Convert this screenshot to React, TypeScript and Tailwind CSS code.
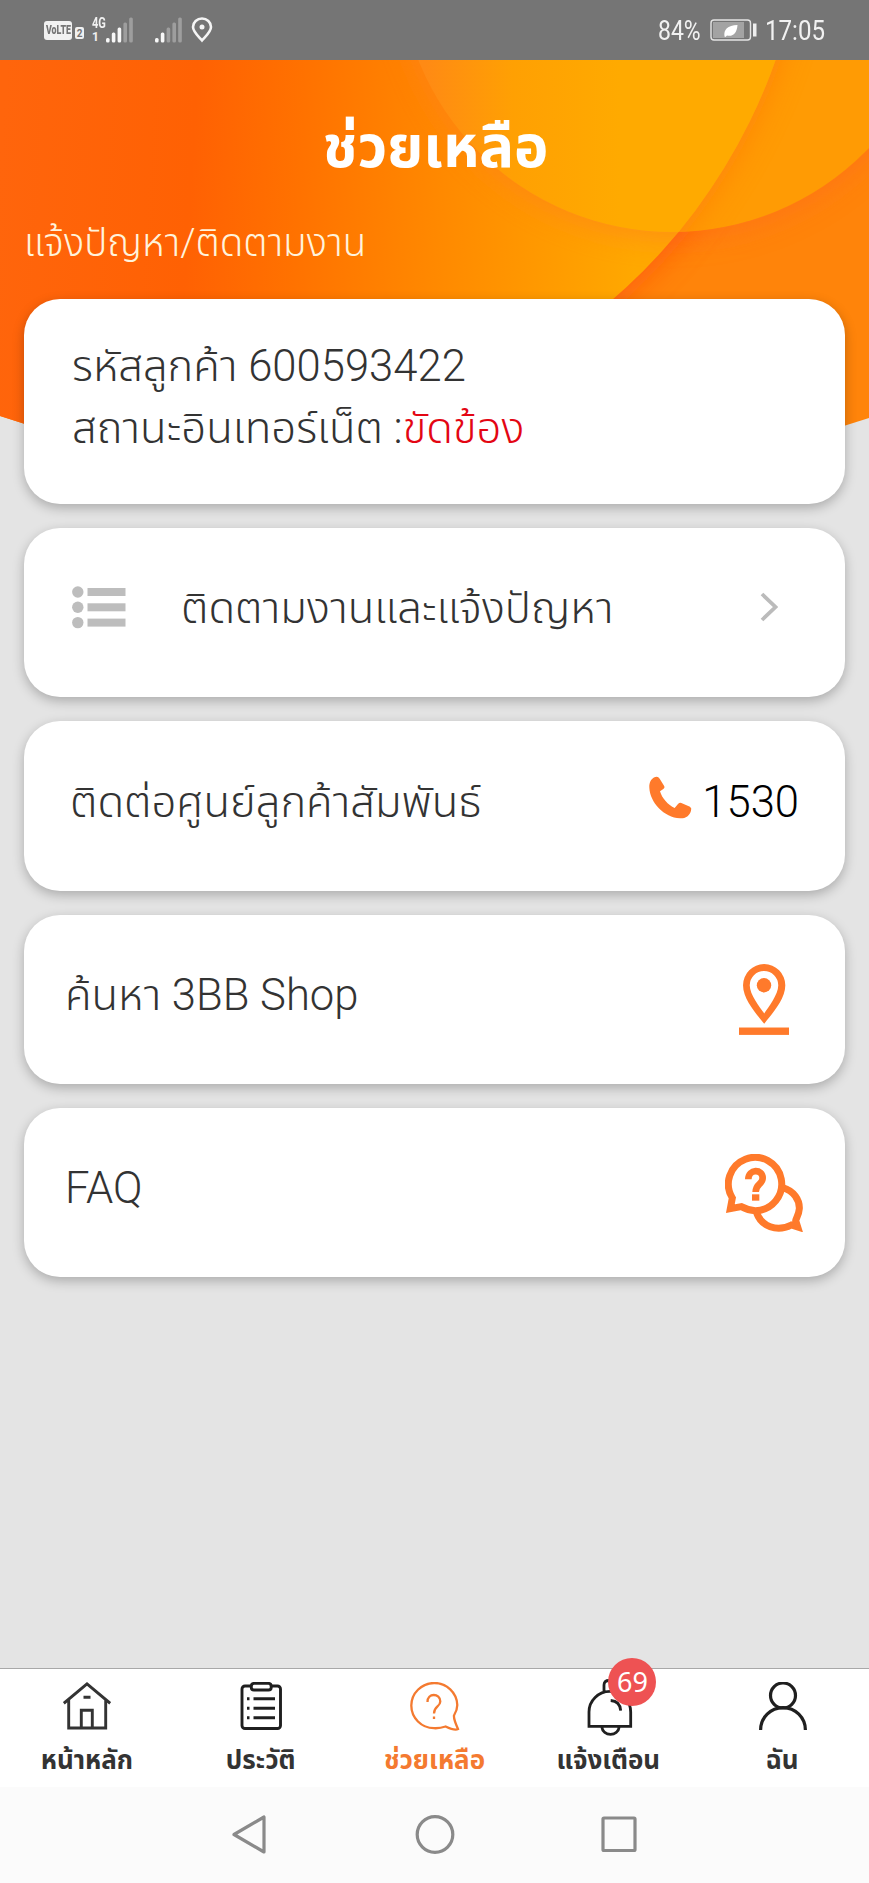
type Tab = {
  label: string;
  active?: boolean;
  badge?: number;
  icon: React.ReactNode;
};

const FONT = "font-['Roboto','Noto_Sans_Thai','Noto_Sans',sans-serif]";

function HeaderArt() {
  return (
    <svg className="col-start-1 row-start-1 block" width="869" height="390" viewBox="0 60 869 390">
      <defs>
        <clipPath id="sheet">
          <path d="M0 60H869V418Q434 560 0 416Z" />
        </clipPath>
        <linearGradient id="sweep" gradientUnits="userSpaceOnUse" x1="0" y1="150" x2="640" y2="190">
          <stop offset="0" stopColor="#ff650c" />
          <stop offset="0.3" stopColor="#ff6103" />
          <stop offset="0.47" stopColor="#ff7200" />
          <stop offset="0.7" stopColor="#ff8a00" />
          <stop offset="1" stopColor="#ffa800" />
        </linearGradient>
        <linearGradient id="sun" gradientUnits="userSpaceOnUse" x1="425" y1="0" x2="620" y2="0">
          <stop offset="0" stopColor="#ff8a14" />
          <stop offset="0.45" stopColor="#ffa003" />
          <stop offset="1" stopColor="#ffaa00" />
        </linearGradient>
        <clipPath id="big">
          <circle cx="240" cy="-129" r="568" />
          <rect y="60" width="300" height="400" />
        </clipPath>
        <clipPath id="disc">
          <circle cx="672" cy="-41" r="273" />
        </clipPath>
        <filter id="soft" x="-20%" y="-20%" width="140%" height="140%">
          <feGaussianBlur stdDeviation="14" />
        </filter>
      </defs>
      <g clipPath="url(#sheet)">
        <rect y="60" width="869" height="400" fill="#ff840a" />
        <circle cx="672" cy="-37" r="275" fill="#ff6a20" opacity="0.55" filter="url(#soft)" />
        <circle cx="242" cy="-125" r="572" fill="#ff5a10" opacity="0.75" filter="url(#soft)" />
        <g clipPath="url(#disc)">
          <rect y="60" width="869" height="200" fill="#ff9b04" />
          <circle cx="242" cy="-125" r="570" fill="#ff7a08" opacity="0.6" filter="url(#soft)" />
        </g>
        <g clipPath="url(#big)">
          <rect y="60" width="869" height="400" fill="url(#sweep)" />
          <circle cx="672" cy="-37" r="275" fill="#ff8020" opacity="0.6" filter="url(#soft)" />
          <circle cx="672" cy="-41" r="273" fill="url(#sun)" />
        </g>
      </g>
    </svg>
  );
}

function SignalBars({ lit }: { lit: number }) {
  return (
    <svg width="28" height="26" viewBox="0 0 28 26" fill="#fff">
      {[4.5, 10, 15, 20, 25].map((h, i) => (
        <rect key={h} x={i * 5.8} y={25.5 - h} width="3.6" height={h} rx="1.5" opacity={i < lit ? 0.95 : 0.3} />
      ))}
    </svg>
  );
}

function StatusBar() {
  return (
    <div className="flex h-[60px] items-center bg-[#757575] pl-11 pr-[43px] text-white/90">
      <div className="flex h-[19px] w-7 items-center justify-center rounded-[3px] bg-white/90 text-[13px] font-black text-[#757575]">
        <span className="scale-x-[0.68]">VoLTE</span>
      </div>
      <div className="ml-[3px] mt-1.5 flex h-3 w-[9px] items-center justify-center rounded-[2px] bg-white/90 text-[10px] font-bold text-[#757575]">
        2
      </div>
      <div className="ml-2 w-3.5 text-[15px] font-bold leading-[14px]">
        <div className="origin-left scale-x-[0.74]">4G</div>
        <div className="text-[12px]">1</div>
      </div>
      <SignalBars lit={3} />
      <div className="w-[21px]" />
      <SignalBars lit={2} />
      <svg className="ml-2" width="22" height="26" viewBox="0 0 22 26" fill="none" stroke="#f5f5f5" strokeWidth="2.6">
        <path d="M11 23.5C6 18 2 14.5 2 10a9 8.5 0 0 1 18 0c0 4.5-4 8-9 13.5Z" />
        <circle cx="11" cy="10" r="2.5" fill="#f5f5f5" stroke="none" />
      </svg>
      <div className="ml-auto flex items-center pt-0.5 text-[28px]">
        <span className="w-[43px] origin-left scale-x-[0.82] whitespace-nowrap">84%</span>
        <svg className="-mt-0.5 ml-[9px]" width="48" height="24" viewBox="0 0 48 24">
          <rect x="1" y="2" width="39.5" height="20" rx="3" fill="none" stroke="#e4e4e4" strokeWidth="1.4" />
          <rect x="3" y="4" width="31" height="16" fill="#a3a3a3" />
          <path d="M14.500 18.500c-1-7 3-11 13-11.500-.5 8-4.500 12-10.500 10.500l-1.500 1.500Z" fill="#fff" />
          <rect x="43" y="5.5" width="3.5" height="13" fill="#eee" />
        </svg>
        <span className="ml-[7px] w-[61px] origin-left scale-x-[0.86] whitespace-nowrap">17:05</span>
      </div>
    </div>
  );
}

function Card({ className = "", children }: { className?: string; children: React.ReactNode }) {
  return (
    <div
      className={`flex items-center rounded-[36px] bg-white font-light text-[#333] shadow-[0_4px_12px_rgba(0,0,0,0.25)] ${className}`}
    >
      {children}
    </div>
  );
}

function ListIcon() {
  return (
    <svg width="54" height="43" viewBox="0 0 54 43" fill="#bdbdbd">
      {[6, 21.3, 36.6].map((y) => (
        <g key={y}>
          <circle cx="5.8" cy={y} r="5.7" />
          <rect x="15.5" y={y - 4} width="38" height="8" />
        </g>
      ))}
    </svg>
  );
}

function PhoneIcon() {
  return (
    <svg width="43" height="43" viewBox="27 31 129 129" fill="#ff7a2b">
      <path d="M28 66C27 50 34 38 46 34Q54 31 59 39L73 62Q75 67 70 70L60 77C66 98 84 118 104 127L114 115Q119 110 124 112L150 123Q156 127 153 135C149 150 136 159 120 158C72 155 30 110 28 66Z" />
    </svg>
  );
}

function PinIcon() {
  return (
    <svg width="50" height="71" viewBox="415 254 149 211" fill="#ff7a2b">
      <path
        fillRule="evenodd"
        d="M490 432C474 410 427 362 427 317A63 63 0 0 1 553 317C553 362 506 410 490 432ZM490 401C503 382 532 345 532 317A42.5 42.5 0 0 0 447 317C447 345 477 382 490 401Z"
      />
      <circle cx="489.5" cy="317" r="21.5" />
      <rect x="415" y="443" width="149" height="22" />
    </svg>
  );
}

function FaqIcon() {
  return (
    <svg width="78" height="78" viewBox="27 26 234 234" fill="none" stroke="#ff7a2b" strokeWidth="21">
      <path d="M200 127C234 137 251 164 250 190C249 208 239 222 239 226L245 245L226 239C182 262 136 242 122 203" />
      <path d="M43 190L49 158A80 80 0 1 1 118 196Q96 195 76 184Z" fill="#fff" />
      <path d="M97 102C97 70 140 70 140 98C140 118 119 114 119 140" strokeWidth="20" />
      <rect x="108" y="147" width="22" height="19" fill="#ff7a2b" stroke="none" />
    </svg>
  );
}

const tabs: Tab[] = [
  {
    label: "หน้าหลัก",
    icon: (
      <svg width="48" height="48" viewBox="0 0 48 48" fill="none" stroke="#333" strokeWidth="2.9">
        <path d="M.8 21.3L24 2L47.2 21.3M5.7 17.5V46H42.7V17.5M18.3 46V28.3H29.3V46M20.5 15.3H27.5" />
      </svg>
    )
  },
  {
    label: "ประวัติ",
    icon: (
      <svg width="48" height="48" viewBox="0 0 48 48" fill="none" stroke="#1f1f1f" strokeWidth="2.9">
        <rect x="5" y="4" width="38.5" height="42.5" rx="3" />
        <path d="M14.3 4.5Q14.3 1.4 17 1.4H31.5Q34.2 1.4 34.2 4.5V5.5Q34.2 8 31.5 8H17Q14.3 8 14.3 5.5Z" fill="#fff" />
        <path d="M16.5 16.7H38M16.5 26.3H38M16.5 35.7H38" />
        <path d="M10 16.7H12.5M10 26.3H12.5M10 35.7H12.5" />
      </svg>
    )
  },
  {
    label: "ช่วยเหลือ",
    active: true,
    icon: (
      <svg className="ml-0.5" width="50" height="50" viewBox="0 0 50 50" fill="none" stroke="#f47a30" strokeWidth="2.3">
        <path d="M24 46.2A23 22.6 0 1 1 47.3 23Q47.3 28 44 33.5Q43.5 37 48 47Q45 49 35.6 44.5Q30 46.5 24 46.2Z" />
        <path d="M17.5 20C17 10.5 30.5 11 30.3 19.5C30.2 25 24 24 24 31.5M24 34.5V37" />
      </svg>
    )
  },
  {
    label: "แจ้งเตือน",
    badge: 69,
    icon: (
      <svg className="-mt-[3px] ml-[3px]" width="50" height="57" viewBox="0 0 50 57" fill="none" stroke="#1f1f1f" strokeWidth="2.8">
        <path d="M4 47.3V33A20.8 20.5 0 0 1 45.7 33V47.3ZM19 13V6Q19 1.5 24 1.5H27M16.7 47.5C18 58 33 58 34.3 47.5M25.7 21.5Q35 22 35.7 31.7" />
      </svg>
    )
  },
  {
    label: "ฉัน",
    icon: (
      <svg className="ml-px" width="48" height="48" viewBox="0 0 48 48" fill="none" stroke="#1f1f1f" strokeWidth="3.2">
        <circle cx="24" cy="13.5" r="12.5" />
        <path d="M1.6 48A22.4 22.4 0 0 1 46.4 48" />
      </svg>
    )
  }
];

function TabBar() {
  return (
    <nav className="grid h-[119px] grid-cols-5 border-t border-[#a8a8a8] bg-white">
      {tabs.map((tab) => (
        <div key={tab.label} className="relative flex flex-col items-center pt-[13px]">
          <div className="h-[58px]">{tab.icon}</div>
          <span className={`text-[26px] font-bold leading-[40px] ${tab.active ? "text-[#f47a30]" : "text-[#333]"}`}>
            {tab.label}
          </span>
          {tab.badge && (
            <span className="absolute -top-[11px] left-[87px] flex h-12 w-12 items-center justify-center rounded-full bg-[#ee5253] font-['Noto_Sans',sans-serif] text-[27px] text-white">
              {tab.badge}
            </span>
          )}
        </div>
      ))}
    </nav>
  );
}

function SystemNav() {
  return (
    <div className="flex h-24 items-center justify-center bg-[#fbfbfb]">
      <svg width="406" height="42" viewBox="0 0 406 42" fill="none" stroke="#8a8a8a" strokeWidth="3.2" strokeLinejoin="round">
        <path d="M2 20.5L32 3V38Z" />
        <circle cx="203" cy="20.5" r="17.8" />
        <rect x="371" y="4" width="32" height="32.5" rx="1" />
      </svg>
    </div>
  );
}

export default function App() {
  return (
    <div className={`flex h-[1883px] w-[869px] flex-col bg-[#e4e4e4] ${FONT}`}>
      <StatusBar />
      <main className="grid min-h-0 flex-1 grid-cols-1 content-start">
        <HeaderArt />
        <div className="col-start-1 row-start-1 flex flex-col">
          <h1 className="mt-[49px] pl-0.5 text-center text-[58px] font-bold leading-[76px] text-white">ช่วยเหลือ</h1>
          <p className="mt-[33px] pl-6 text-[38.5px] font-light leading-[50px] text-[#fff3dc]">แจ้งปัญหา/ติดตามงาน</p>
          <div className="mt-[31px] flex flex-col gap-6 px-6 text-[43.6px]">
            <Card className="h-[205px] pb-2 pl-12">
              <div className="leading-[62px]">
                <p>รหัสลูกค้า 600593422</p>
                <p>
                  สถานะอินเทอร์เน็ต :<span className="text-[#e30613]">ขัดข้อง</span>
                </p>
              </div>
            </Card>
            <Card className="h-[169.3px] pb-[11px] pl-12 pr-[67px]">
              <ListIcon />
              <span className="ml-[55px] pt-1">ติดตามงานและแจ้งปัญหา</span>
              <svg className="ml-auto" width="18" height="30" viewBox="0 0 18 30" fill="none" stroke="#bbb" strokeWidth="3.8">
                <path d="M2 2L15.5 15L2 28" />
              </svg>
            </Card>
            <Card className="h-[169.3px] pb-[7px] pl-[46px] pr-[46px]">
              <span>ติดต่อศูนย์ลูกค้าสัมพันธ์</span>
              <div className="mb-2.5 ml-auto mr-2.5">
                <PhoneIcon />
              </div>
              <span className="text-black">1530</span>
            </Card>
            <Card className="h-[169.3px] pl-[41px] pr-[56px]">
              <span className="pb-2">ค้นหา 3BB Shop</span>
              <div className="ml-auto">
                <PinIcon />
              </div>
            </Card>
            <Card className="h-[169.3px] pl-[41px] pr-[42px]">
              <span className="pb-2">FAQ</span>
              <div className="ml-auto">
                <FaqIcon />
              </div>
            </Card>
          </div>
        </div>
      </main>
      <TabBar />
      <SystemNav />
    </div>
  );
}
